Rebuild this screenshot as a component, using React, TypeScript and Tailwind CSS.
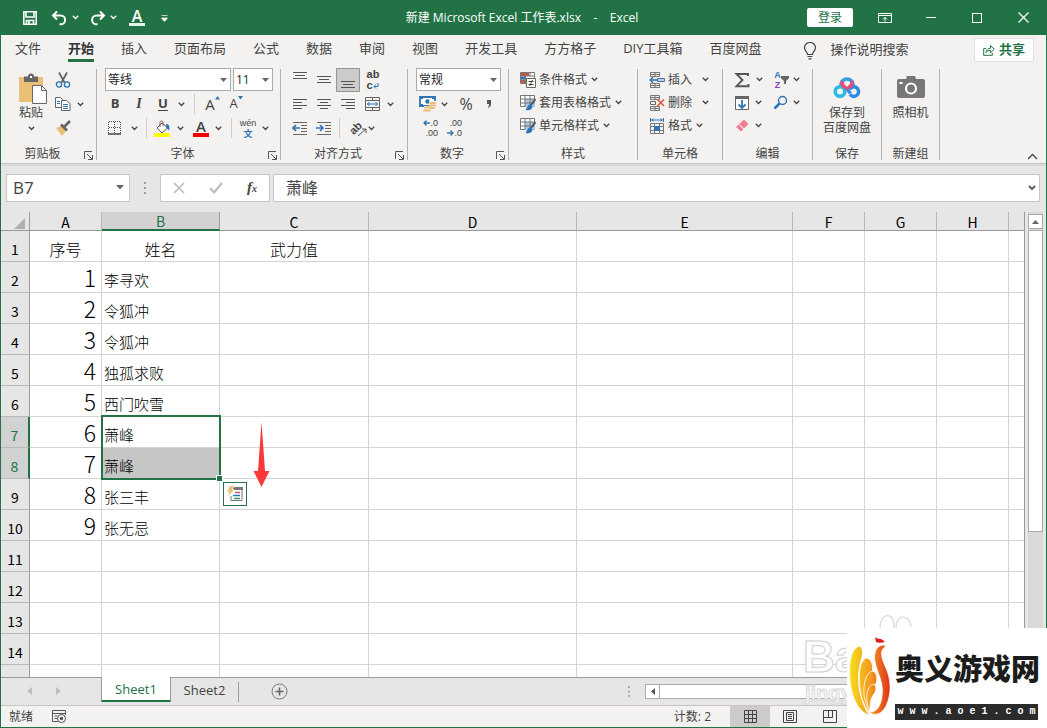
import type { ReactNode } from 'react';

const UI_FONT = "font-['Open_Sans','Noto_Sans_CJK_SC',sans-serif]";
const SHEET_FONT = "font-['Noto_Sans_CJK_SC',sans-serif]";
const TINY_FONT = "font-['Liberation_Sans','Noto_Sans_CJK_SC',sans-serif]";

const tabs = ['文件', '开始', '插入', '页面布局', '公式', '数据', '审阅', '视图', '开发工具', '方方格子', 'DIY工具箱', '百度网盘'];

const columns = [
  { name: 'A', width: 'w-[72px]' },
  { name: 'B', width: 'w-[118px]' },
  { name: 'C', width: 'w-[149px]' },
  { name: 'D', width: 'w-[208px]' },
  { name: 'E', width: 'w-[216px]' },
  { name: 'F', width: 'w-[72px]' },
  { name: 'G', width: 'w-[72px]' },
  { name: 'H', width: 'w-[72px]' },
];

const names = ['李寻欢', '令狐冲', '令狐冲', '独孤求败', '西门吹雪', '萧峰', '萧峰', '张三丰', '张无忌'];
const rows = Array.from({ length: 15 }, (_, i) => i + 1);

function Svg({ w = 16, h = 16, children, className = '' }: { w?: number; h?: number; children: ReactNode; className?: string }) {
  return (
    <svg width={w} height={h} viewBox={`0 0 ${w} ${h}`} fill="none" aria-hidden="true" className={`shrink-0 ${className}`}>
      {children}
    </svg>
  );
}

function Chevron({ className = 'text-[#444]' }: { className?: string }) {
  return (
    <Svg w={7} h={5} className={className}>
      <path d="M0.8 0.8 3.5 3.5 6.2 0.8" stroke="currentColor" strokeWidth="1.3" />
    </Svg>
  );
}

function Btn({ label, className = 'w-6', children }: { label: string; className?: string; children: ReactNode }) {
  return (
    <button type="button" aria-label={label} title={label} className={`flex h-6 shrink-0 items-center justify-center ${className}`}>
      {children}
    </button>
  );
}

function More({ label, className = 'w-4' }: { label: string; className?: string }) {
  return (
    <Btn label={label} className={className}>
      <Chevron />
    </Btn>
  );
}

function Sep({ className = '' }: { className?: string }) {
  return <span className={`h-5 w-px shrink-0 bg-[#d0cecd] ${className}`} />;
}

function Combo({ label, value, className }: { label: string; value: string; className: string }) {
  return (
    <div className={`relative h-[23px] shrink-0 ${className}`}>
      <select aria-label={label} defaultValue={value} className="h-full w-full appearance-none border border-[#ababab] bg-white pl-[2px] text-xs text-[#262626]">
        <option>{value}</option>
      </select>
      <Svg w={7} h={4} className="pointer-events-none absolute top-[10px] right-1">
        <path d="M0 0h7L3.5 4z" fill="#666" />
      </Svg>
    </div>
  );
}

type GroupProps = { title: string; className: string; inner?: string; launcher?: boolean; children: ReactNode };

function Group({ title, className, inner = '', launcher = false, children }: GroupProps) {
  return (
    <section className={`flex h-[91px] shrink-0 flex-col border-r border-[#b5b3b2] ${className}`}>
      <div className={`h-[77px] ${inner}`}>{children}</div>
      <div className="mt-auto flex h-3 items-center">
        <h2 className="flex-1 text-center text-xs leading-3">{title}</h2>
        {launcher && (
          <button type="button" aria-label={`${title}设置`} className="mt-[2px] mr-[3px]">
            <Svg w={9} h={9}>
              <path d="M0.5 8V0.5H8M3 3l5 5M8.5 4v4.5H4" stroke="#555" />
            </Svg>
          </button>
        )}
      </div>
    </section>
  );
}

function Lines({ ends }: { ends: [number, number, number][] }) {
  return (
    <Svg>
      {ends.map(([x1, x2, y]) => (
        <path key={y} d={`M${x1} ${y}.5H${x2}`} stroke="#555" />
      ))}
    </Svg>
  );
}

function TitleBar() {
  return (
    <header className="grid h-[35px] shrink-0 grid-cols-[1fr_auto_1fr] items-center bg-[#217346] text-white">
      <div className="flex items-center pl-[22px]">
        <button type="button" aria-label="保存">
          <Svg>
            <path d="M1.8 1.8h12.4v12.4H1.8zM4 2v5h8V2M4.5 14v-3.5h7V14M7 11v3" stroke="#fff" strokeWidth="1.6" />
          </Svg>
        </button>
        <button type="button" aria-label="撤消" className="ml-[13px]">
          <Svg>
            <path d="M6 1.5 2 5.5l4 4M2.5 5.5h7.2a4 4 0 0 1 0 8.8H8.5" stroke="#fff" strokeWidth="2" />
          </Svg>
        </button>
        <button type="button" aria-label="撤消列表" className="ml-[5px]"><Chevron className="text-white" /></button>
        <button type="button" aria-label="恢复" className="ml-[11px]">
          <Svg>
            <path d="m10 1.5 4 4-4 4M13.5 5.5H6.5a4 4 0 0 0 0 8.8H7.5" stroke="#fff" strokeWidth="2" />
          </Svg>
        </button>
        <button type="button" aria-label="恢复列表" className="ml-1"><Chevron className="text-white" /></button>
        <button type="button" aria-label="字体颜色" className="ml-3 flex flex-col items-center">
          <span className="h-[14px] text-base leading-[14px] font-semibold">A</span>
          <span className="h-[3px] w-4 bg-[#e8f2ec]" />
        </button>
        <button type="button" aria-label="自定义快速访问工具栏" className="ml-4">
          <Svg w={7} h={8}>
            <path d="M0.5 1.5h6M0.5 4h6L3.5 7.5z" stroke="#fff" fill="#fff" strokeWidth="0.7" />
          </Svg>
        </button>
      </div>
      <h1 className="text-xs whitespace-pre">{'新建 Microsoft Excel 工作表.xlsx    -    Excel '}</h1>
      <div className="flex items-center justify-end pr-px">
        <button type="button" className="mr-[9px] h-[19px] w-[46px] rounded-[2px] bg-white text-xs leading-[19px] text-[#217346]">登录</button>
        <Btn label="功能区显示选项" className="w-[46px]">
          <Svg w={14} h={12}>
            <path d="M.5 1.5h13v9H.5zM.5 3.5h13M7 9.5V5.5M5 7.3l2-2 2 2" stroke="#fff" />
          </Svg>
        </Btn>
        <Btn label="最小化" className="w-[46px]"><span className="h-px w-[10px] bg-white" /></Btn>
        <Btn label="最大化" className="w-[46px]"><span className="h-[10px] w-[10px] border border-white" /></Btn>
        <Btn label="关闭" className="w-[46px]">
          <Svg w={11} h={11}>
            <path d="m.5.5 10 10M10.5.5l-10 10" stroke="#fff" strokeWidth="1.2" />
          </Svg>
        </Btn>
      </div>
    </header>
  );
}

function RibbonTabs() {
  return (
    <nav className="flex h-[33px] shrink-0 items-start pr-3 pl-[14px] text-[13px] text-[#444]">
      <div className="flex gap-[27px]">
        {tabs.map((tab) => (
          <button
            key={tab}
            type="button"
            className={`h-[27px] leading-[27px] whitespace-nowrap ${tab === '开始' ? 'border-b-3 border-[#217346] font-bold text-[#333]' : ''}`}
          >
            {tab}
          </button>
        ))}
      </div>
      <Svg w={14} h={18} className="mt-[7px] ml-[41px]">
        <path d="M4.5 12.5C4.5 9.5 1.5 9 1.5 5.8a5.5 5.3 0 0 1 11 0c0 3.2-3 3.7-3 6.7zM4.5 14.5h5M5.5 16.8h3" stroke="#444" strokeWidth="1.2" />
      </Svg>
      <input aria-label="操作说明搜索" placeholder="操作说明搜索" className="ml-[14px] h-7 w-24 min-w-0 bg-transparent placeholder:text-[#444]" />
      <button type="button" className="mt-[3px] ml-auto flex h-6 w-[60px] items-center justify-center gap-1 rounded-[2px] border border-[#e1dfdd] bg-white font-bold text-[#217346]">
        <Svg w={12} h={12}>
          <path d="M3 4.5H.7v6.8h8.6V9M3 8.5c.3-3 2-4.3 4.5-4.3V1.5l3.8 3.7-3.8 3.5V6.3C5.5 6.3 4 7 3 8.5z" stroke="#217346" />
        </Svg>
        <span>共享</span>
      </button>
    </nav>
  );
}

function StyleIcon() {
  return (
    <Svg>
      <path d="M.5.5h14v11H.5z" fill="#fff" stroke="#777" />
      <path d="M5 4h10v8H5z" fill="#a9c8ea" />
      <path d="M.5 4h14M.5 8h14M5 .5v11M10 .5v11" stroke="#777" />
      <path d="m15.5 4-5 6.5" stroke="#555" strokeWidth="2" />
      <path d="M10.5 9.5c-3 0-3 3-5 5.5 4 1 7-.5 7-3.5z" fill="#2f75b5" />
    </Svg>
  );
}

function CellsIcon({ kind }: { kind: 'insert' | 'delete' }) {
  return (
    <Svg>
      <path d="M1.5.5h9v4h-9zM6 .5v4M1.5 11.5h9v4h-9zM6 11.5v4M1.5 2.5h9M1.5 13.5h9" stroke="#777" />
      {kind === 'insert' ? (
        <>
          <path d="M8.5 6.5h7v3h-7z" fill="#b8d2ec" stroke="#4d6f94" />
          <path d="M1 8h7M4 5.3 1.2 8 4 10.7" stroke="#2f75b5" strokeWidth="1.5" />
        </>
      ) : (
        <>
          <path d="M1.5 6.5h5v3h-5z" stroke="#666" />
          <path d="m8.5 4.5 6.5 6.5M15 4.5 8.5 11" stroke="#e0583c" strokeWidth="1.7" />
        </>
      )}
    </Svg>
  );
}

function TextCommand({ icon, text, chevron = 'ml-1' }: { icon: ReactNode; text: string; chevron?: string }) {
  return (
    <button type="button" className="flex h-[23px] items-center text-xs whitespace-nowrap">
      {icon}
      <span className="ml-[3px]">{text}</span>
      <span className={chevron}><Chevron /></span>
    </button>
  );
}

function Ribbon() {
  return (
    <div className="flex shrink-0 border-b border-[#c8c6c4] pt-px pb-[3px] text-xs text-[#444]">
      <Group title="剪贴板" launcher className="w-24" inner="flex pl-[14px]">
        <button type="button" className="flex w-8 flex-col items-center self-start pt-1">
          <Svg w={30} h={31} className="ml-1">
            <path d="M1 4h24v25H1z" fill="#eabf76" />
            <path d="M6 3.5h4a3 3 0 0 1 6 0h4V9H6z" fill="#666" />
            <path d="M12 3h2v2h-2z" fill="#fff" />
            <path d="M14.5 12.5h9l5 5V30.5h-14z" fill="#fff" stroke="#666" />
            <path d="M23.5 12.5v5h5" stroke="#666" />
          </Svg>
          <span className="leading-[18px]">粘贴</span>
          <span className="mt-1"><Chevron /></span>
        </button>
        <div className="-mt-px ml-[7px]">
          <Btn label="剪切" className="w-[18px]">
            <Svg>
              <path d="m4 .5 5.5 10M12 .5l-5.500 10" stroke="#666" strokeWidth="1.8" />
              <circle cx="4" cy="12.5" r="2.6" stroke="#2f75b5" strokeWidth="1.3" />
              <circle cx="12" cy="12.5" r="2.6" stroke="#2f75b5" strokeWidth="1.3" />
            </Svg>
          </Btn>
          <div className="flex">
            <Btn label="复制" className="w-[18px]">
              <Svg>
                <path d="M.5 1.5h5l3 3v7h-8z" fill="#fff" stroke="#666" />
                <path d="M6.5 4.5h5l3.5 3V14.5H6.5z" fill="#fff" stroke="#666" />
                <path d="M2 5.5h3M2 7.5h3M8 8.5h5M8 10.5h5M8 12.5h5" stroke="#2f75b5" />
              </Svg>
            </Btn>
            <More label="复制选项" />
          </div>
          <Btn label="格式刷" className="w-[18px]">
            <Svg>
              <path d="m1 8 5-2 5 5-4 5z" fill="#eabf76" />
              <path d="m6 4.5 6 6M9.5 6.5 15 1" stroke="#666" strokeWidth="2.8" />
            </Svg>
          </Btn>
        </div>
      </Group>

      <Group title="字体" launcher className="w-[184px]" inner="-mt-px pl-2">
        <div className="flex h-6 items-start gap-[2px]">
          <Combo label="字体" value="等线" className="w-[126px]" />
          <Combo label="字号" value="11" className="w-10" />
        </div>
        <div className="flex items-center">
          <Btn label="加粗" className="w-5 text-[13px] font-bold">B</Btn>
          <Btn label="倾斜" className="w-7 font-['Liberation_Serif',serif] text-sm font-bold italic">I</Btn>
          <Btn label="下划线" className="w-5 text-[13px] font-bold underline underline-offset-2">U</Btn>
          <More label="下划线选项" />
          <Sep className="ml-[5px]" />
          <Btn label="增大字号" className="w-[31px] pl-1 text-[15px]">
            A<Svg w={5} h={4} className="mb-3"><path d="M0 3.5h5L2.5 0z" fill="#2f75b5" /></Svg>
          </Btn>
          <Btn label="减小字号" className="w-5 text-[13px]">
            A<Svg w={5} h={4} className="mb-3"><path d="M0 0h5L2.5 3.5z" fill="#2f75b5" /></Svg>
          </Btn>
        </div>
        <div className="flex items-center">
          <Btn label="边框" className="w-5">
            <Svg w={14} h={14}>
              <path d="M.5 1v12M6.5 1v12M12.5 1v12M1 .5h12M1 6.5h12" stroke="#555" strokeDasharray="1 1" />
              <path d="M0 13h13" stroke="#444" strokeWidth="1.5" />
            </Svg>
          </Btn>
          <More label="边框选项" className="w-[18px]" />
          <Sep className="ml-[3px]" />
          <Btn label="填充颜色" className="ml-[3px] w-6">
            <Svg w={17} h={17}>
              <path d="m8 3 5.5 5L8 13 3 8z" fill="#fff" stroke="#555" />
              <path d="M6 7V2.5C6 .5 9 .5 9 2.5V6" stroke="#8a5a5a" />
              <path d="M12 4c3 0 4 2.5 3 6.5L12.5 8z" fill="#2f75b5" />
              <path d="M0 13h16v4H0z" fill="#ffff00" />
            </Svg>
          </Btn>
          <More label="填充颜色选项" className="w-[13px]" />
          <Btn label="字体颜色" className="ml-1 w-5 flex-col">
            <span className="text-[15px] leading-[13px] font-semibold">A</span>
            <span className="h-1 w-4 bg-[#f00000]" />
          </Btn>
          <More label="字体颜色选项" className="w-[15px]" />
          <Sep className="ml-[5px]" />
          <Btn label="拼音指南" className="ml-1 w-6">
            <Svg w={20} h={24} className={TINY_FONT}>
              <text x="10" y="10" textAnchor="middle" fill="#444" className="text-[9px]">wén</text>
              <text x="10" y="21" textAnchor="middle" fill="#2f75b5" className="text-[9px] font-bold">文</text>
            </Svg>
          </Btn>
          <More label="拼音选项" className="w-[11px]" />
        </div>
      </Group>

      <Group title="对齐方式" launcher className="w-[127px]" inner="-mt-px pl-[7px]">
        <div className="flex">
          <Btn label="顶端对齐"><Lines ends={[[1, 15, 0], [3, 13, 3], [1, 15, 6]]} /></Btn>
          <Btn label="垂直居中"><Lines ends={[[1, 15, 4], [3, 13, 7], [1, 15, 10]]} /></Btn>
          <Btn label="底端对齐" className="w-6 border border-[#969696] bg-[#cdcbca]"><Lines ends={[[1, 15, 9], [3, 13, 12], [1, 15, 15]]} /></Btn>
          <Btn label="自动换行" className="w-[26px]">
            <span className={`flex flex-col text-[11px] leading-[11px] font-bold ${TINY_FONT}`}>
              <span>ab</span>
              <span className="flex items-center">c<Svg w={6} h={7}><path d="M5 1v3.5H1M3 2.5l-2 2 2 2" stroke="#2f75b5" /></Svg></span>
            </span>
          </Btn>
        </div>
        <div className="flex">
          <Btn label="左对齐"><Lines ends={[[1, 15, 3], [1, 10, 6], [1, 15, 9], [1, 10, 12]]} /></Btn>
          <Btn label="居中"><Lines ends={[[1, 15, 3], [4, 12, 6], [1, 15, 9], [4, 12, 12]]} /></Btn>
          <Btn label="右对齐"><Lines ends={[[1, 15, 3], [6, 15, 6], [1, 15, 9], [6, 15, 12]]} /></Btn>
          <Btn label="合并后居中" className="w-[26px]">
            <Svg>
              <path d="M.5 1.5h14v13H.5zM.5 4.5h14M.5 11.5h14M7.5 1.5v3M7.5 11.5v3" stroke="#666" />
              <path d="M2 8h11M4.5 6 2.5 8l2 2M10.5 6l2 2-2 2" stroke="#2f75b5" />
            </Svg>
          </Btn>
          <More label="合并选项" className="w-2" />
        </div>
        <div className="flex items-center">
          <Btn label="减少缩进量">
            <Svg>
              <path d="M1 2.5h14M9 5.5h6M9 8.5h6M9 11.5h6M1 14.5h14" stroke="#666" />
              <path d="M8 8H1M4 5 1 8l3 3" stroke="#2f75b5" strokeWidth="1.7" />
            </Svg>
          </Btn>
          <Btn label="增加缩进量">
            <Svg>
              <path d="M1 2.5h14M9 5.5h6M9 8.5h6M9 11.5h6M1 14.5h14" stroke="#666" />
              <path d="M0 8h7M4 5l3 3-3 3" stroke="#2f75b5" strokeWidth="1.7" />
            </Svg>
          </Btn>
          <Sep className="ml-[3px]" />
          <Btn label="方向" className="ml-1 w-[22px]">
            <span className="relative flex">
              <span className={`-rotate-45 text-[11px] leading-4 font-bold ${TINY_FONT}`}>ab</span>
              <Svg w={10} h={9} className="absolute top-2 left-2"><path d="m1 8 8-7M5 1h4v4" stroke="#555" /></Svg>
            </span>
          </Btn>
          <More label="方向选项" className="w-[10px]" />
        </div>
      </Group>

      <Group title="数字" launcher className="w-[101px]" inner="-mt-px pl-2">
        <div className="flex h-6 items-start">
          <Combo label="数字格式" value="常规" className="w-[85px]" />
        </div>
        <div className="flex">
          <Btn label="会计数字格式" className="w-[22px]">
            <Svg w={17}>
              <path d="M1 1h15v9H1z" fill="#fff" stroke="#2f75b5" strokeWidth="1.8" />
              <path d="M1 1h3v2H1zM13 1h3v2h-3zM1 8h3v2H1z" fill="#2f75b5" />
              <circle cx="8.5" cy="5.5" r="2.3" fill="#2f75b5" />
              <path d="M10 5h7v8h-7zM5 10h7v6H5z" fill="#f3f2f1" />
              <path d="M11 7h5M11 9.5h5M11 12h4M6 11.5h5M5 14.5h6" stroke="#eabf76" strokeWidth="2" strokeLinecap="round" />
            </Svg>
          </Btn>
          <More label="货币选项" className="w-3" />
          <Btn label="百分比样式" className="ml-[3px] w-[26px] text-base">%</Btn>
          <Btn label="千位分隔样式" className="w-5">
            <Svg w={6} h={8}><path d="M1 0h4v4c0 2-1 3.5-3.5 4 1-1 1.5-2 1.5-4H1z" fill="#555" /></Svg>
          </Btn>
        </div>
        <div className={`flex gap-[2px] text-[9px] leading-[10px] ${TINY_FONT}`}>
          <Btn label="增加小数位数" className="w-[22px] flex-col items-end">
            <span className="flex items-center">
              <Svg w={7} h={6}><path d="M7 3H1M3.5.5 1 3l2.5 2.5" stroke="#2f75b5" strokeWidth="1.3" /></Svg>.0
            </span>
            <span>.00</span>
          </Btn>
          <Btn label="减少小数位数" className="w-[22px] flex-col items-end">
            <span>.00</span>
            <span className="flex items-center">
              <Svg w={7} h={6}><path d="M0 3h6M3.5.5 6 3 3.5 5.5" stroke="#2f75b5" strokeWidth="1.3" /></Svg>.0
            </span>
          </Btn>
        </div>
      </Group>

      <Group title="样式" className="w-[129px]" inner="-mt-px pl-[11px]">
        <TextCommand
          text="条件格式"
          icon={
            <Svg>
              <path d="M.5.5h14v11H.5z" fill="#fff" stroke="#777" />
              <path d="M1 1h8v3H1zM1 8h5v3H1z" fill="#c8583c" />
              <path d="M1 4.5h5v3H1z" fill="#2f75b5" />
              <path d="M5 .5v11M10 .5v4M.5 4h14M.5 8h6" stroke="#777" />
              <path d="M6.5 6.5h9v9h-9z" fill="#fff" stroke="#666" />
              <path d="M8.5 9.5h5M8.5 12.5h5M12.5 8l-3 6" stroke="#444" />
            </Svg>
          }
        />
        <TextCommand text="套用表格格式" icon={<StyleIcon />} />
        <TextCommand text="单元格样式" icon={<StyleIcon />} />
      </Group>

      <Group title="单元格" className="w-[85px]" inner="-mt-px pl-[11px]">
        <TextCommand text="插入" chevron="ml-[10px]" icon={<CellsIcon kind="insert" />} />
        <TextCommand text="删除" chevron="ml-[10px]" icon={<CellsIcon kind="delete" />} />
        <TextCommand
          text="格式"
          icon={
            <Svg>
              <path d="M1.5 5.5h13v10h-13zM1.5 8.5h13M1.5 12.5h13M5.5 5.5v10M10.5 5.5v10" stroke="#777" />
              <path d="M5 8h6v5H5z" fill="#2f75b5" />
              <path d="M1.5 0v4M14.5 0v4M2 2h12M4.5.5 3 2l1.5 1.5M11.5.5 13 2l-1.5 1.5" stroke="#2f75b5" />
            </Svg>
          }
        />
      </Group>

      <Group title="编辑" className="w-[90px]" inner="-mt-px pl-2">
        <div className="flex h-[23px] items-center">
          <Btn label="自动求和" className="w-[22px]">
            <Svg><path d="M14 4V2H2.5L8.5 8l-6 6.2H14.500V12" stroke="#555" strokeWidth="1.9" /></Svg>
          </Btn>
          <More label="求和选项" className="w-[13px]" />
          <Btn label="排序和筛选" className="ml-[6px] w-[19px]">
            <span className={`flex flex-col text-[9px] leading-[10px] font-bold ${TINY_FONT}`}>
              <span className="text-[#2f75b5]">A</span><span className="text-[#8e44ad]">Z</span>
            </span>
            <Svg w={8} h={8}><path d="M0 0h8v2L5 5v3H3V5L0 2z" fill="#666" /></Svg>
          </Btn>
          <More label="排序选项" className="w-[10px]" />
        </div>
        <div className="flex h-[23px] items-center">
          <Btn label="填充" className="w-[22px]">
            <Svg>
              <path d="M1.5 1.5h13v13h-13z" fill="#fff" stroke="#666" />
              <path d="M1 1h14v3H1z" fill="#666" />
              <path d="M8 5v8M4.5 9.5 8 13l3.5-3.5" stroke="#2f75b5" strokeWidth="1.8" />
            </Svg>
          </Btn>
          <More label="填充选项" className="w-[11px]" />
          <Btn label="查找和选择" className="ml-[6px] w-[21px]">
            <Svg>
              <circle cx="9.5" cy="5.5" r="4" stroke="#2f75b5" strokeWidth="1.5" />
              <path d="m6.5 8.5-5 5" stroke="#2f75b5" strokeWidth="2.5" />
            </Svg>
          </Btn>
          <More label="查找选项" className="w-[10px]" />
        </div>
        <div className="flex h-[23px] items-center">
          <Btn label="清除" className="w-[22px]">
            <Svg>
              <path d="M10 1.500 14.500 6 7 13.500 2 9z" fill="#ec7f94" />
              <path d="m5 6.500 5 4.500" stroke="#fff" />
            </Svg>
          </Btn>
          <More label="清除选项" className="w-[11px]" />
        </div>
      </Group>

      <Group title="保存" className="w-[69px]">
        <button type="button" className="flex w-full flex-col items-center pt-[6px] leading-[15px]">
          <Svg w={28} h={24}>
            <path d="M8.5 12.5A6 6 0 1 1 19.5 12.5" stroke="#2f9fe8" strokeWidth="3.5" />
            <circle cx="7" cy="16.5" r="4.8" stroke="#2cbbe2" strokeWidth="3.5" />
            <path d="M16.5 14.5a4.8 4.8 0 1 1 .5 5" stroke="#2a8be4" strokeWidth="3.5" />
            <path d="M9 6c-1 4 2 5.5 5 8 3-2.5 6-4 5-8" stroke="#ec4a74" strokeWidth="3.5" />
            <path d="m14 14 3.5 4.500" stroke="#3d8fe4" strokeWidth="3.5" />
          </Svg>
          <span className="mt-[6px]">保存到</span>
          <span>百度网盘</span>
        </button>
      </Group>

      <Group title="新建组" className="w-[58px]">
        <button type="button" className="flex w-full flex-col items-center pt-[6px] leading-[15px]">
          <Svg w={28} h={24}>
            <path d="M2 4h7l1-3h8l1 3h7a2 2 0 0 1 2 2v15a2 2 0 0 1-2 2H2a2 2 0 0 1-2-2V6a2 2 0 0 1 2-2z" fill="#777" />
            <circle cx="14" cy="13.5" r="5" stroke="#fff" strokeWidth="2.2" />
            <path d="M2.5 7h3v2h-3z" fill="#fff" />
          </Svg>
          <span className="mt-[6px]">照相机</span>
        </button>
      </Group>

      <button type="button" aria-label="折叠功能区" className="mr-2 ml-auto self-end">
        <Svg w={11} h={7}><path d="m1 6 4.5-4.5L10 6" stroke="#444" strokeWidth="1.3" /></Svg>
      </button>
    </div>
  );
}

function FormulaBar() {
  return (
    <div className={`flex h-12 shrink-0 border-t-2 border-[#dadada] bg-[#e6e6e6] pt-2 pr-[6px] pl-[5px] text-[#444] ${SHEET_FONT}`}>
      <div className="relative h-7 w-[124px] shrink-0">
        <input aria-label="名称框" defaultValue="B7" className="h-full w-full border border-[#c6c6c6] bg-white pb-[2px] pl-[6px] font-['Open_Sans',sans-serif] text-[17px]" />
        <Svg w={8} h={5} className="absolute top-[11px] right-[6px]"><path d="M0 0h8L4 4.5z" fill="#666" /></Svg>
      </div>
      <Svg w={2} h={12} className="mt-2 ml-[14px]">
        <path d="M1 0v2M1 5v2M1 10v2" stroke="#999" strokeWidth="2" />
      </Svg>
      <div className="ml-[14px] flex h-7 w-[110px] shrink-0 items-center justify-between border border-[#c6c6c6] bg-white px-3">
        <button type="button" aria-label="取消">
          <Svg w={12} h={12}><path d="m1 1 10 10M11 1 1 11" stroke="#bbb" strokeWidth="1.6" /></Svg>
        </button>
        <button type="button" aria-label="输入">
          <Svg w={14} h={12}><path d="m1 6 4 4.5L13 1" stroke="#bbb" strokeWidth="2" /></Svg>
        </button>
        <button type="button" aria-label="插入函数" className="font-['Liberation_Serif',serif] text-[15px] leading-5 font-bold italic">
          f<span className="text-[10px]">x</span>
        </button>
      </div>
      <div className="relative ml-[3px] h-7 min-w-0 flex-1">
        <input aria-label="编辑栏" defaultValue="萧峰" className="h-full w-full border border-[#c6c6c6] bg-white pr-6 pb-[2px] pl-3 text-base" />
        <Svg w={8} h={6} className="absolute top-[11px] right-1"><path d="m1 1 3 3 3-3" stroke="#555" strokeWidth="1.8" /></Svg>
      </div>
    </div>
  );
}

// Outline of the selected range, with the flash-fill button and the pointer arrow next to it.
function Selection() {
  return (
    <div className="absolute -top-[2px] -left-px z-10 h-[65px] w-[120px] border-2 border-[#217346]">
      <span className="absolute -right-[4px] -bottom-[4px] h-[7px] w-[7px] border border-white bg-[#217346]" />
      <button type="button" aria-label="快速填充选项" className="absolute top-[65px] left-[120px] flex h-6 w-6 items-center justify-center border border-[#217346] bg-white">
        <Svg>
          <path d="M6 2.5h9v12h-11V10" stroke="#777" />
          <path d="M7 1h9v3H7z" fill="#777" />
          <path d="M8 6.5h5" stroke="#c05078" strokeWidth="1.5" />
          <path d="M6 9.5h7" stroke="#2f75b5" strokeWidth="1.5" />
          <path d="M7 12.5h6" stroke="#3c9a62" strokeWidth="1.5" />
          <path d="M3 0h4L5 4h2L1 10l1.5-4.500H0z" fill="#eabf76" />
        </Svg>
      </button>
      <Svg w={17} h={66} className="absolute top-[5px] left-[150px]">
        <path d="M8.5 0 12 49h4.5L8.5 65 .5 49H5z" fill="#fa3838" />
      </Svg>
    </div>
  );
}

function Cell({ row, column }: { row: number; column: string }) {
  const line = 'border-r border-b border-[#d4d4d4] p-0 whitespace-nowrap';
  if (row === 1) {
    const heading = { A: '序号', B: '姓名', C: '武力值' }[column];
    return <td className={`${line} pt-[6px] text-center text-base leading-6 font-light`}>{heading}</td>;
  }
  const name = names[row - 2];
  if (column === 'A' && name) {
    return <td className={`${line} pr-[5px] text-right text-[23px] leading-[30px] font-light`}>{row - 1}</td>;
  }
  if (column === 'B' && name) {
    return (
      <td className={`${line} relative pt-[6px] pl-[2px] text-[15px] leading-6 font-light ${row === 8 ? 'bg-[#c6c6c6] bg-clip-padding' : ''}`}>
        {name}
        {row === 7 && <Selection />}
      </td>
    );
  }
  return <td className={line} />;
}

function Sheet() {
  return (
    <div className={`flex min-h-0 flex-1 overflow-hidden bg-[#e6e6e6] text-black ${SHEET_FONT}`}>
      <div className="min-w-0 flex-1 overflow-hidden border-r border-[#9b9b9b] bg-white">
        <table className="w-full table-fixed border-separate border-spacing-0">
          <thead>
            <tr className="h-[19px] bg-[#e6e6e6] text-sm leading-4">
              <th className="w-[29px] border-r border-b border-[#9b9b9b] p-0">
                <Svg w={11} h={11} className="mt-1 mr-1 ml-auto"><path d="M11 0v11H0z" fill="#b0b0b0" /></Svg>
              </th>
              {columns.map(({ name, width }) => (
                <th
                  key={name}
                  scope="col"
                  className={`border-r p-0 pt-px font-normal ${width} ${
                    name === 'B'
                      ? 'border-b-2 border-r-[#9b9b9b] border-b-[#217346] bg-[#d2d2d2] text-[#217346]'
                      : 'border-b border-r-[#b8b8b8] border-b-[#9b9b9b]'
                  }`}
                >
                  {name}
                </th>
              ))}
              <th className="border-b border-[#9b9b9b] p-0" />
            </tr>
          </thead>
          <tbody>
            {rows.map((row) => {
              const active = row === 7 || row === 8;
              return (
                <tr key={row} className="h-[31px]">
                  <th
                    scope="row"
                    className={`p-0 pt-[6px] text-center text-sm leading-5 font-normal ${
                      active
                        ? 'border-r-2 border-b border-r-[#217346] border-b-[#b8b8b8] bg-[#d2d2d2] text-[#217346]'
                        : 'border-r border-b border-r-[#9b9b9b] border-b-[#b8b8b8] bg-[#e6e6e6]'
                    }`}
                  >
                    {row < 15 ? row : ''}
                  </th>
                  {columns.map(({ name }) => (
                    <Cell key={name} row={row} column={name} />
                  ))}
                  <td className="border-b border-[#d4d4d4] p-0" />
                </tr>
              );
            })}
          </tbody>
        </table>
      </div>
      <div className="mr-[3px] ml-[3px] flex w-[15px] shrink-0 flex-col bg-[#d9d9d9]">
        <button type="button" aria-label="向上滚动" className="mt-[2px] flex h-[15px] items-center justify-center border border-[#ababab] bg-white">
          <Svg w={7} h={4}><path d="M0 4h7L3.5 0z" fill="#666" /></Svg>
        </button>
        <div className="mt-px h-[302px] border border-[#ababab] bg-white" />
      </div>
    </div>
  );
}

function SheetTabs() {
  return (
    <div className="flex h-[29px] shrink-0 items-start border-t border-b border-t-[#9b9b9b] border-b-[#c6c6c6] bg-[#e6e6e6] text-[13px] text-[#444]">
      <div className="flex h-[26px] w-[100px] shrink-0 items-center gap-6 pl-[26px]">
        <Svg w={5} h={8}><path d="M5 0v8L0 4z" fill="#bdbdbd" /></Svg>
        <Svg w={5} h={8}><path d="M0 0v8l5-4z" fill="#bdbdbd" /></Svg>
      </div>
      <button type="button" className="-mt-px h-[25px] w-[70px] shrink-0 border-r border-b-2 border-l border-r-[#9b9b9b] border-b-[#217346] border-l-[#9b9b9b] bg-white leading-[22px] text-[#217346]">Sheet1</button>
      <button type="button" className="h-6 w-[67px] shrink-0 leading-[22px]">Sheet2</button>
      <span className="mt-1 h-5 w-px bg-[#9b9b9b]" />
      <button type="button" aria-label="新工作表" className="mt-[5px] ml-8">
        <Svg w={17} h={17}>
          <circle cx="8.5" cy="8.5" r="7.5" stroke="#777" />
          <path d="M8.5 4.5v8M4.5 8.5h8" stroke="#666" strokeWidth="1.6" />
        </Svg>
      </button>
      <Svg w={2} h={11} className="mt-2 ml-auto">
        <path d="M1 0v2M1 4.5v2M1 9v2" stroke="#aaa" strokeWidth="2" />
      </Svg>
      <div className="mt-[6px] mr-6 ml-[15px] flex h-[15px] w-[377px] shrink-0">
        <button type="button" aria-label="向左滚动" className="flex w-[15px] items-center justify-center border border-[#ababab] bg-white">
          <Svg w={4} h={7}><path d="M4 0v7L0 3.5z" fill="#555" /></Svg>
        </button>
        <div className="flex-1 border border-l-0 border-[#ababab] bg-white" />
      </div>
    </div>
  );
}

function StatusBar() {
  return (
    <footer className="flex h-[21px] shrink-0 items-center bg-[#f3f2f1] pl-2 text-xs text-[#444]">
      <span>就绪</span>
      <button type="button" aria-label="录制宏" className="ml-[19px]">
        <Svg w={15} h={14}>
          <path d="M6 11.5H.5V.5h13V5M.5 3.5h13M2.5 6h3M2.5 8.5h3" stroke="#555" />
          <circle cx="9.5" cy="8.5" r="4" stroke="#555" />
          <circle cx="9.5" cy="8.5" r="1.7" fill="#555" />
        </Svg>
      </button>
      <span className="ml-auto">计数: 2</span>
      <div className="mr-[196px] ml-[19px] flex h-full">
        <button type="button" aria-label="普通" className="flex w-10 items-center justify-center bg-[#cdcbca]">
          <Svg w={13} h={13}><path d="M.5.5h12v12H.5zM.5 4.5h12M.5 8.5h12M4.5.5v12M8.5.5v12" stroke="#444" /></Svg>
        </button>
        <button type="button" aria-label="页面布局视图" className="flex w-10 items-center justify-center">
          <Svg w={14} h={13}><path d="M.5.5h13v12H.5zM3.5 2.5h7v8h-7zM5 4.5h4M5 6.5h4M5 8.5h4" stroke="#444" /></Svg>
        </button>
        <button type="button" aria-label="分页预览" className="flex w-10 items-center justify-center">
          <Svg w={14} h={13}><path d="M.5.5h13v12H.5zM.5 7.5h9M5.5.5v7M9.5.5v7" stroke="#444" /></Svg>
        </button>
      </div>
    </footer>
  );
}

function Watermark() {
  return (
    <div aria-hidden="true" className="absolute right-0 bottom-0 z-20 flex items-end">
      <Svg w={60} h={78} className={`-mr-4 mb-5 ${TINY_FONT}`}>
        <text x="0" y="42" fill="#fff" stroke="#d0d0d0" className="text-[44px] font-bold">Ba</text>
        <text x="2" y="70" fill="#f6f6f6" stroke="#d4d4d4" strokeWidth="0.8" className="text-[20px] font-bold">jingy</text>
      </Svg>
      <div className="relative flex h-[100px] w-[200px] bg-white">
        <Svg w={34} h={13} className="absolute -top-[13px] left-8">
          <path d="M1 13C1-3 15-3 15 10v3M17 13C17-2 31-1 32 12" stroke="#dedede" strokeWidth="1.5" />
        </Svg>
        <Svg w={48} h={100}>
          <defs>
            <linearGradient id="flame" x1="3" y1="0" x2="44" y2="0" gradientUnits="userSpaceOnUse">
              <stop stopColor="#f6dc1c" />
              <stop offset="0.5" stopColor="#f39a1e" />
              <stop offset="1" stopColor="#e02c1a" />
            </linearGradient>
          </defs>
          <g fill="url(#flame)" stroke="#fff" strokeWidth="0.8">
            <path d="M13 18C2 20 1 42 4 60c3 15 10 25 18 27C14 74 10 58 12 42c1-10 7-18 1-24z" />
            <path d="M20 30c-7 1-9 16-7 30 1 11 5 20 10 25-4-14-4-25 1-36 3-8 2-17-4-19z" />
            <path d="M26 43c-7 1-10 13-9 24 1 7 3 12 6 16-2-12 0-18 4-24 4-5 4-13-1-16z" />
            <path d="M27 56c-6 1-8 9-7 16 0 4 1 8 3 10 0-8 1-12 4-16 2-3 3-7 0-10z" />
            <path d="M38 17c-8-1-12 7-10 17 2 11 9 20 7 34-1 10-6 17-13 16 6 5 13 2 17-6 6-13 5-26 0-38-4-9-6-15-3-19 1-2 3-2 2-4z" />
          </g>
          <path d="M28 9c2 3 6 0 10 5-3 1-7 1-9 0z" fill="#dc2020" />
        </Svg>
        <div className="flex flex-col pt-[10px]">
          <span className="text-[29px] leading-[62px] font-black text-[#1c1c1c]">奥义游戏网</span>
          <span className="mt-1 h-4 w-[143px] bg-[#2b2b2b] text-center font-['Liberation_Mono',monospace] text-[10px] leading-4 font-bold whitespace-nowrap text-white">
            w w w . a o e 1 . c o m
          </span>
        </div>
      </div>
    </div>
  );
}

export default function App() {
  return (
    <main className={`relative flex h-screen min-w-0 flex-col overflow-hidden bg-[#f3f2f1] ${UI_FONT}`}>
      <TitleBar />
      <div className="flex min-h-0 flex-1 flex-col border-x border-b border-[#217346]">
        <RibbonTabs />
        <Ribbon />
        <FormulaBar />
        <Sheet />
        <SheetTabs />
        <StatusBar />
      </div>
      <Watermark />
    </main>
  );
}
